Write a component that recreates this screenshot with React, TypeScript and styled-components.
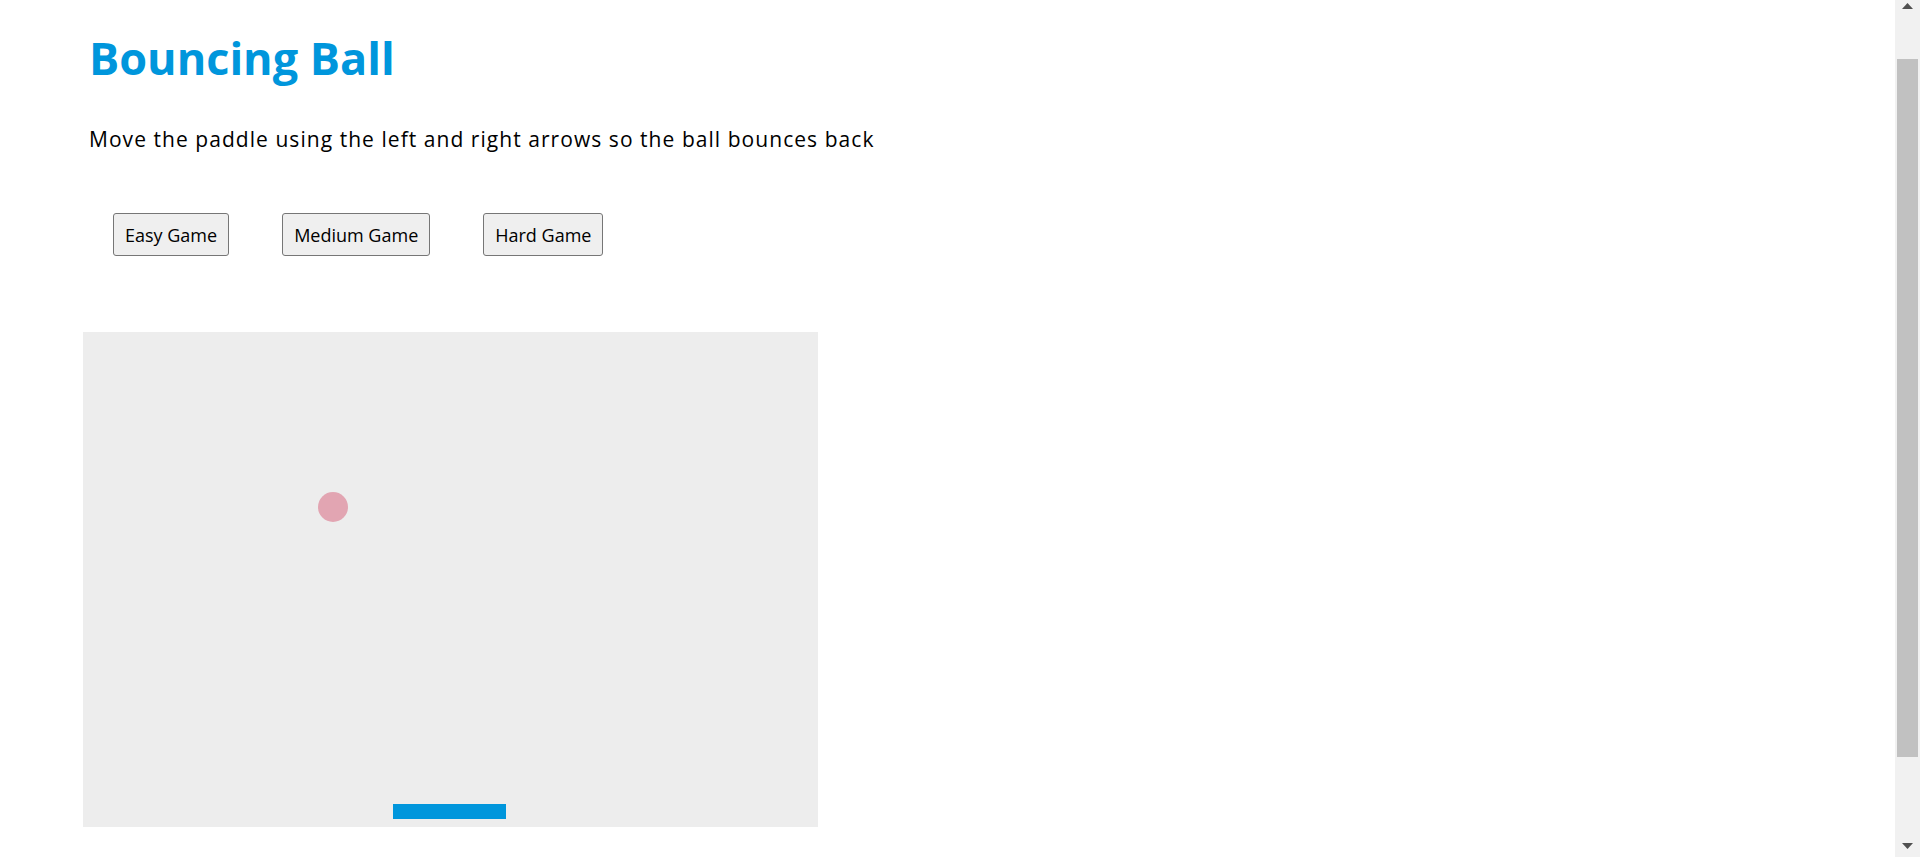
import React from "react";
import styled, { createGlobalStyle } from "styled-components";

const GlobalStyle = createGlobalStyle`
  html, body {
    margin: 0;
    padding: 0;
    background: #ffffff;
    font-family: "Open Sans", "Liberation Sans", sans-serif;
    overflow: hidden;
  }
`;

const Shell = styled.div`
  display: flex;
  width: 100vw;
  height: 100vh;
  overflow: hidden;
`;

const Page = styled.main`
  flex: 1;
  min-width: 0;
  box-sizing: border-box;
  padding: 27px 0 0 83px;
  display: flex;
  flex-direction: column;
  align-items: flex-start;
`;

const Title = styled.h1`
  margin: 0 0 0 6px;
  font-size: 45px;
  font-weight: 700;
  line-height: normal;
  color: #0096dc;
`;

const Intro = styled.p`
  margin: 37px 0 0 6px;
  font-size: 21px;
  letter-spacing: 1.05px;
  line-height: normal;
  color: #000000;
`;

const ButtonRow = styled.div`
  display: flex;
  gap: 53px;
  margin-top: 60px;
  padding-left: 30px;
`;

const GameButton = styled.button`
  box-sizing: border-box;
  height: 43px;
  padding: 0 11px;
  border: 1px solid #767676;
  border-radius: 3px;
  background: #efefef;
  color: #000000;
  font-family: "Open Sans", "Liberation Sans", sans-serif;
  font-size: 18px;
  cursor: pointer;
`;

const Board = styled.div`
  position: relative;
  margin-top: 76px;
  width: 735px;
  height: 495px;
  flex-shrink: 0;
  background: #ededed;
`;

const Ball = styled.div<{ $x: number; $y: number }>`
  position: absolute;
  left: ${(p) => p.$x}px;
  top: ${(p) => p.$y}px;
  width: 30px;
  height: 30px;
  border-radius: 50%;
  background: #e2a5b2;
`;

const Paddle = styled.div<{ $x: number }>`
  position: absolute;
  left: ${(p) => p.$x}px;
  bottom: 8px;
  width: 113px;
  height: 15px;
  background: #0096dc;
`;

const ScrollBar = styled.div`
  width: 25px;
  flex-shrink: 0;
  display: flex;
  flex-direction: column;
  background: #f1f1f1;
`;

const ArrowButton = styled.div<{ $pad: number }>`
  height: 20px;
  flex-shrink: 0;
  box-sizing: border-box;
  padding-top: ${(p) => p.$pad}px;
  display: flex;
  justify-content: center;
  align-items: flex-start;
`;

const Track = styled.div`
  flex: 1;
  box-sizing: border-box;
  padding: 39px 2px 0;
`;

const Thumb = styled.div`
  height: 698px;
  background: #c1c1c1;
`;

function ArrowIcon({ down }: { down?: boolean }) {
  return (
    <svg width="11" height="6" viewBox="0 0 11 6" style={{ display: "block" }}>
      <polygon points={down ? "0,0 11,0 5.5,6" : "5.5,0 11,6 0,6"} fill="#505050" />
    </svg>
  );
}

export default function App() {
  return (
    <>
      <GlobalStyle />
      <Shell>
        <Page>
          <Title>Bouncing Ball</Title>
          <Intro>Move the paddle using the left and right arrows so the ball bounces back</Intro>
          <ButtonRow>
            <GameButton>Easy Game</GameButton>
            <GameButton>Medium Game</GameButton>
            <GameButton>Hard Game</GameButton>
          </ButtonRow>
          <Board>
            <Ball $x={235} $y={160} />
            <Paddle $x={310} />
          </Board>
        </Page>
        <ScrollBar>
          <ArrowButton $pad={3}>
            <ArrowIcon />
          </ArrowButton>
          <Track>
            <Thumb />
          </Track>
          <ArrowButton $pad={6}>
            <ArrowIcon down />
          </ArrowButton>
        </ScrollBar>
      </Shell>
    </>
  );
}
